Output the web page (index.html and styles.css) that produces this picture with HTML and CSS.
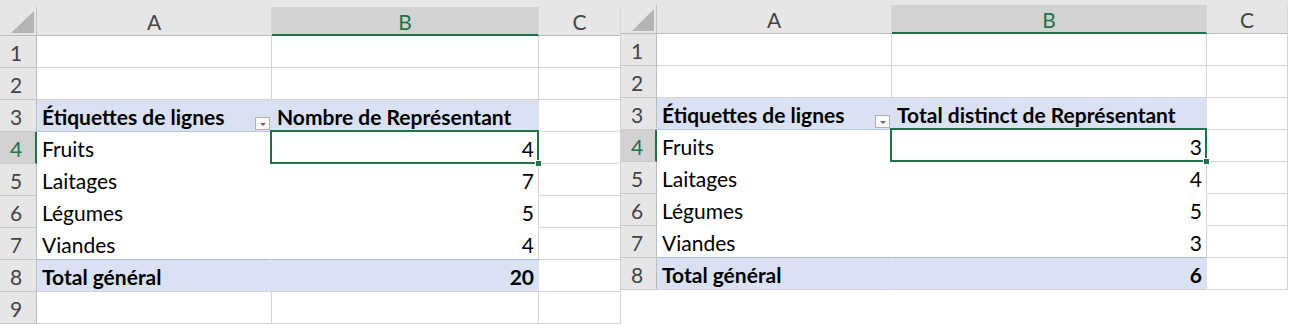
FILE: index.html
```html
<!DOCTYPE html>
<html lang="fr">

<head>
    <meta charset="UTF-8">
    <title>Tableaux croisés</title>
    <link rel="stylesheet" href="styles.css">
</head>

<body>
    <div class="book">
        <!--feuille 1 : nombre-->
        <div class="sheet sheet-count">
            <div class="band"></div>
            <div class="grid">
                <div class="corner"><span class="tri"></span></div>
                <div class="col-hd">A</div>
                <div class="col-hd on">B</div>
                <div class="col-hd">C</div>

                <div class="row-hd">1</div>
                <div class="c"></div><div class="c"></div><div class="c"></div>
                <div class="row-hd">2</div>
                <div class="c"></div><div class="c"></div><div class="c"></div>

                <div class="row-hd">3</div>
                <div class="c pv pv-head pv-a">Étiquettes de lignes<span class="filter"></span></div>
                <div class="c pv pv-head">Nombre de Représentant</div>
                <div class="c"></div>

                <div class="row-hd on">4</div>
                <div class="c pv pv-a">Fruits</div>
                <div class="c pv num sel">4</div>
                <div class="c"></div>
                <div class="row-hd">5</div>
                <div class="c pv pv-a">Laitages</div>
                <div class="c pv num">7</div>
                <div class="c"></div>
                <div class="row-hd">6</div>
                <div class="c pv pv-a">Légumes</div>
                <div class="c pv num">5</div>
                <div class="c"></div>
                <div class="row-hd">7</div>
                <div class="c pv pv-a pv-last">Viandes</div>
                <div class="c pv num pv-last">4</div>
                <div class="c"></div>

                <div class="row-hd">8</div>
                <div class="c pv pv-total pv-a">Total général</div>
                <div class="c pv pv-total num">20</div>
                <div class="c"></div>

                <div class="row-hd">9</div>
                <div class="c"></div><div class="c"></div><div class="c"></div>
            </div>
        </div>

        <!--feuille 2 : total distinct-->
        <div class="sheet sheet-distinct">
            <div class="band"></div>
            <div class="grid">
                <div class="corner"><span class="tri"></span></div>
                <div class="col-hd">A</div>
                <div class="col-hd on">B</div>
                <div class="col-hd">C</div>

                <div class="row-hd">1</div>
                <div class="c"></div><div class="c"></div><div class="c"></div>
                <div class="row-hd">2</div>
                <div class="c"></div><div class="c"></div><div class="c"></div>

                <div class="row-hd">3</div>
                <div class="c pv pv-head pv-a">Étiquettes de lignes<span class="filter"></span></div>
                <div class="c pv pv-head">Total distinct de Représentant</div>
                <div class="c"></div>

                <div class="row-hd on">4</div>
                <div class="c pv pv-a">Fruits</div>
                <div class="c pv num sel">3</div>
                <div class="c"></div>
                <div class="row-hd">5</div>
                <div class="c pv pv-a">Laitages</div>
                <div class="c pv num">4</div>
                <div class="c"></div>
                <div class="row-hd">6</div>
                <div class="c pv pv-a">Légumes</div>
                <div class="c pv num">5</div>
                <div class="c"></div>
                <div class="row-hd">7</div>
                <div class="c pv pv-a pv-last">Viandes</div>
                <div class="c pv num pv-last">3</div>
                <div class="c"></div>

                <div class="row-hd">8</div>
                <div class="c pv pv-total pv-a">Total général</div>
                <div class="c pv pv-total num">6</div>
                <div class="c"></div>
            </div>
        </div>
    </div>
</body>

</html>
```

FILE: styles.css
```css
html,
body {
    margin: 0;
    padding: 0;
    background: #fff;
}

body {
    font-family: Lato, "Open Sans", sans-serif;
    font-size: 21px;
    color: #000;
}

.book {
    display: flex;
    align-items: flex-start;
}

/*bande grise au-dessus des en-têtes*/
.band {
    background: #e6e6e6;
}

.sheet-count .band {
    height: 7px;
}

.sheet-distinct .band {
    height: 5px;
}

.grid {
    display: grid;
    grid-auto-rows: 32px;
}

.sheet-count .grid {
    width: 621px;
    grid-template-columns: 37px 235px 267px 82px;
    grid-template-rows: 29px;
}

.sheet-distinct .grid {
    width: 667px;
    grid-template-columns: 36px 235px 315px 81px;
    grid-template-rows: 29px;
}

.grid > div {
    box-sizing: border-box;
}

/*en-têtes*/
.corner {
    background: #e6e6e6;
    border-right: 1px solid #c4c4c4;
    border-bottom: 1px solid #bdbdbd;
    display: flex;
    align-items: flex-end;
    justify-content: flex-end;
    padding: 0 2px 2px 0;
}

.tri {
    width: 23px;
    height: 22px;
    background: #b4b4b4;
    clip-path: polygon(100% 0, 100% 100%, 0 100%);
}

.sheet-distinct .tri {
    width: 22px;
}

.col-hd {
    background: #e6e6e6;
    border-bottom: 1px solid #bdbdbd;
    border-right: 1px solid #dadada;
    color: #444;
    text-align: center;
    line-height: 30px;
}

.col-hd.on {
    background: #d2d2d2;
    color: #217346;
    border-bottom: 2px solid #217346;
}

.row-hd {
    background: #e6e6e6;
    border-right: 1px solid #bdbdbd;
    border-bottom: 1px solid #cacaca;
    color: #444;
    padding: 2px 0 0 10px;
    line-height: 30px;
}

.row-hd.on {
    background: #d2d2d2;
    color: #217346;
    border-right: 2px solid #217346;
}

/*cellules*/
.c {
    border-right: 1px solid #d4d4d4;
    border-bottom: 1px solid #d4d4d4;
    padding: 2px 4px 0 5px;
    line-height: 30px;
    white-space: nowrap;
    position: relative;
}

.num {
    text-align: right;
}

/*tableau croisé*/
.pv {
    border-bottom-color: transparent;
}

.pv-a {
    border-right-color: transparent;
}

.pv-head,
.pv-total {
    background: #d9e1f2;
    font-weight: bold;
}

.pv-head {
    border-bottom-color: #b4c6e7;
}

.pv-last {
    border-bottom-color: #a9b8d6;
}

.pv-total {
    border-bottom-color: #d4d4d4;
}

.pv-total.num {
    border-right-color: transparent;
}

.pv-head.pv-a,
.pv-head:not(.pv-a) {
    border-right-color: transparent;
}

/*bouton de filtre*/
.filter {
    position: absolute;
    right: 1px;
    bottom: 1px;
    width: 15px;
    height: 13px;
    box-sizing: border-box;
    border: 1px solid #b0b0b0;
    background: #fafafa;
}

.filter::after {
    content: '';
    position: absolute;
    left: 4px;
    top: 5px;
    border-left: 3px solid transparent;
    border-right: 3px solid transparent;
    border-top: 3px solid #6a6a6a;
}

/*cellule active*/
.sel {
    z-index: 2;
}

.sel::before {
    content: '';
    position: absolute;
    left: -2px;
    top: -2px;
    right: -1px;
    bottom: -1px;
    border: 2px solid #217346;
}

.sel::after {
    content: '';
    position: absolute;
    right: -4px;
    bottom: -4px;
    width: 5px;
    height: 5px;
    background: #217346;
    border: 1px solid #fff;
}
```
